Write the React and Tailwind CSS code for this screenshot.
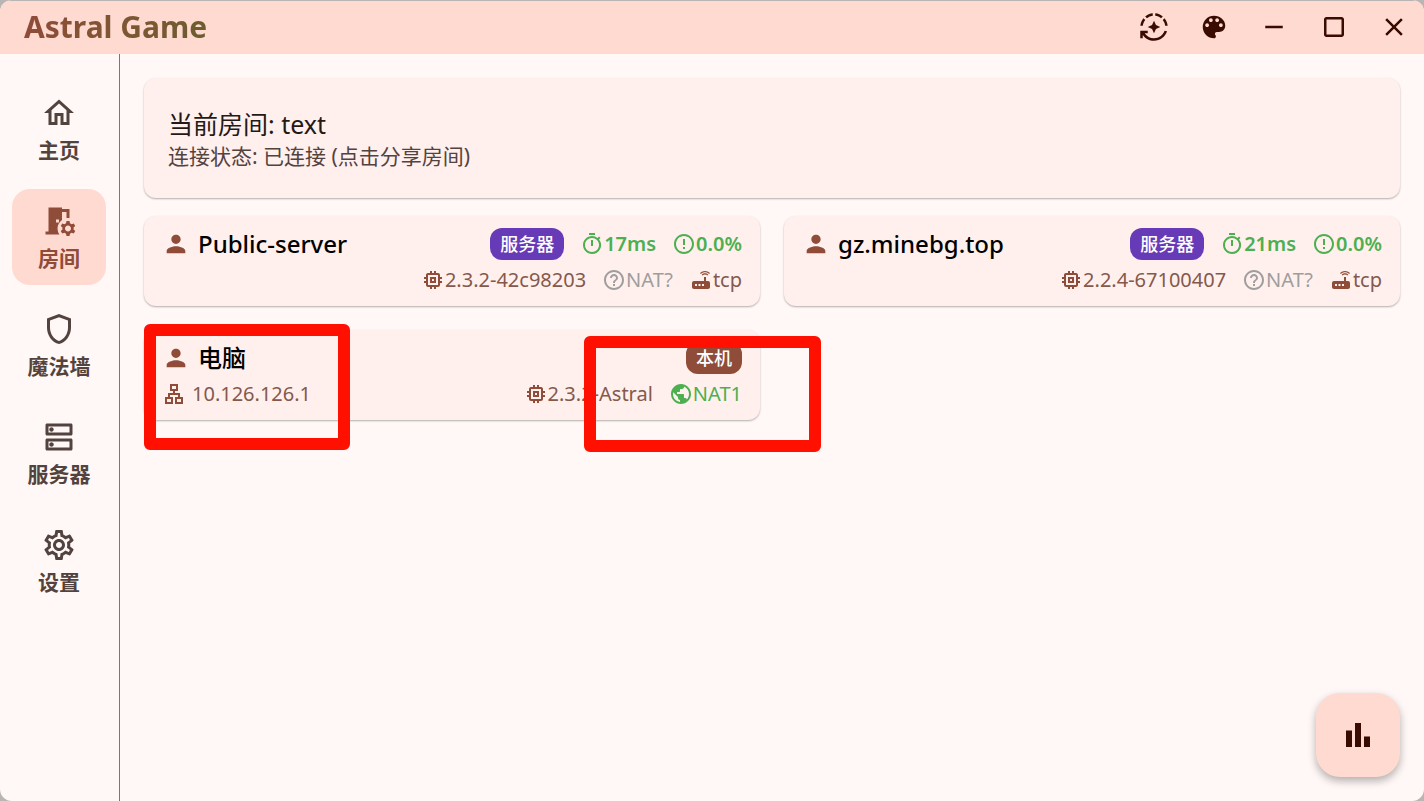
import {
  MdAutoMode,
  MdBarChart,
  MdClose,
  MdColorLens,
  MdCropSquare,
  MdErrorOutline,
  MdHelpOutline,
  MdMemory,
  MdOutlineDns,
  MdOutlineHome,
  MdOutlineLan,
  MdOutlineSettings,
  MdOutlineShield,
  MdOutlineTimer,
  MdPerson,
  MdPublic,
  MdRemove,
  MdRoomPreferences,
  MdRouter,
} from "react-icons/md";

const windowActions = [
  { label: "自动主题", Icon: MdAutoMode },
  { label: "主题颜色", Icon: MdColorLens },
  { label: "最小化", Icon: MdRemove },
  { label: "最大化", Icon: MdCropSquare },
  { label: "关闭", Icon: MdClose },
];

const navItems = [
  { label: "主页", Icon: MdOutlineHome },
  { label: "房间", Icon: MdRoomPreferences, active: true },
  { label: "魔法墙", Icon: MdOutlineShield },
  { label: "服务器", Icon: MdOutlineDns },
  { label: "设置", Icon: MdOutlineSettings },
];

const peers = [
  {
    name: "Public-server",
    badge: "服务器",
    badgeClass: "bg-[#673ab7]",
    latency: "17ms",
    loss: "0.0%",
    version: "2.3.2-42c98203",
    nat: "NAT?",
    protocol: "tcp",
  },
  {
    name: "gz.minebg.top",
    badge: "服务器",
    badgeClass: "bg-[#673ab7]",
    latency: "21ms",
    loss: "0.0%",
    version: "2.2.4-67100407",
    nat: "NAT?",
    protocol: "tcp",
  },
  {
    name: "电脑",
    badge: "本机",
    badgeClass: "bg-[#8f4c38]",
    ip: "10.126.126.1",
    version: "2.3.2-Astral",
    nat: "NAT1",
    natKnown: true,
  },
];

function Stat({ Icon, iconClass = "", className = "", children }) {
  return (
    <span className={`flex items-center ${className}`}>
      <Icon size={24} className={`shrink-0 ${iconClass}`} aria-hidden="true" />
      {children}
    </span>
  );
}

function TitleBar() {
  return (
    <header className="flex h-[54px] shrink-0 items-center justify-between border-t border-[#b9b5b4] bg-[#ffdad1] pb-px pl-6">
      <h1 className="bg-linear-to-r from-[#8f4c38] to-[#6c5d2f] bg-clip-text text-[30px] leading-9 font-bold text-transparent">
        Astral Game
      </h1>
      <div className="flex text-[#3a0b01]">
        {windowActions.map(({ label, Icon }) => (
          <button key={label} type="button" aria-label={label} className="flex h-12 w-[60px] items-center justify-center">
            <Icon size={30} aria-hidden="true" />
          </button>
        ))}
      </div>
    </header>
  );
}

function Sidebar() {
  return (
    <nav className="flex w-[120px] shrink-0 flex-col gap-3 border-r border-[#85736e] pt-[27px] pr-[13px] pl-3">
      {navItems.map(({ label, Icon, active }) => (
        <a
          key={label}
          href="#"
          aria-current={active ? "page" : undefined}
          className={`flex h-24 flex-col items-center gap-1 rounded-[18px] pt-[14px] text-[21px] leading-[30px] font-bold ${
            active ? "bg-[#ffdad1] text-[#8f4c38]" : "text-[#53433f]"
          }`}
        >
          <Icon size={36} aria-hidden="true" />
          {label}
        </a>
      ))}
    </nav>
  );
}

const cardClass = "rounded-xl bg-[#fff0ed] shadow-[0_1px_2px_rgba(0,0,0,0.3)]";

function PeerCard({ peer }) {
  return (
    <article className={`flex justify-between px-[18px] pt-[10px] pb-2 text-[20px] leading-9 text-[#84594c] ${cardClass}`}>
      <div>
        <h2 className="flex items-center gap-2 text-[24px] font-medium text-black">
          <MdPerson size={28} className="shrink-0 text-[#8f4c38]" aria-hidden="true" />
          {peer.name}
        </h2>
        {peer.ip && (
          <Stat Icon={MdOutlineLan} iconClass="text-[#8f4c38]" className="gap-[6px]">
            {peer.ip}
          </Stat>
        )}
      </div>
      <div className="flex flex-col items-end">
        <div className="flex h-9 items-center gap-4 font-semibold text-[#4caf50]">
          <span className={`rounded-xl px-[10px] text-[18px] leading-8 font-medium text-white ${peer.badgeClass}`}>
            {peer.badge}
          </span>
          {peer.latency && <Stat Icon={MdOutlineTimer}>{peer.latency}</Stat>}
          {peer.loss && <Stat Icon={MdErrorOutline}>{peer.loss}</Stat>}
        </div>
        <div className="flex h-9 items-center gap-4">
          <Stat Icon={MdMemory} iconClass="text-[#8f4c38]">{peer.version}</Stat>
          <Stat
            Icon={peer.natKnown ? MdPublic : MdHelpOutline}
            className={peer.natKnown ? "text-[#4caf50]" : "text-[#9e9e9e]"}
          >
            {peer.nat}
          </Stat>
          {peer.protocol && (
            <Stat Icon={MdRouter} iconClass="text-[#8f4c38]">{peer.protocol}</Stat>
          )}
        </div>
      </div>
    </article>
  );
}

export default function App() {
  return (
    <div className="bg-[#b9b5b4] font-['Noto_Sans','Noto_Sans_CJK_SC',sans-serif]">
      <div className="relative flex min-h-screen flex-col overflow-hidden rounded-xl bg-[#fff8f6]">
        <TitleBar />
        <div className="flex flex-1">
          <Sidebar />
          <main className="flex min-w-0 flex-1 flex-col gap-[18px] p-6">
            <button type="button" className={`px-6 py-7 text-left ${cardClass}`}>
              <span className="block text-[25px] leading-9 text-[#231917]">当前房间: text</span>
              <span className="block text-[21px] leading-7 text-[#53433f]">连接状态: 已连接 (点击分享房间)</span>
            </button>
            <section className="grid grid-cols-2 gap-6">
              {peers.map((peer) => (
                <PeerCard key={peer.name} peer={peer} />
              ))}
            </section>
            <button
              type="button"
              aria-label="统计"
              className="mt-auto flex size-[84px] items-center justify-center self-end rounded-3xl bg-[#ffdad1] text-[#3a0b01] shadow-[0_4px_8px_rgba(0,0,0,0.3)]"
            >
              <MdBarChart size={36} aria-hidden="true" />
            </button>
          </main>
        </div>
        <div className="pointer-events-none absolute top-[324px] left-36 h-[126px] w-[206px] rounded-md border-12 border-[#ff1000]" />
        <div className="pointer-events-none absolute top-[336px] left-[584px] h-[116px] w-[237px] rounded-md border-12 border-[#ff1000]" />
      </div>
    </div>
  );
}
